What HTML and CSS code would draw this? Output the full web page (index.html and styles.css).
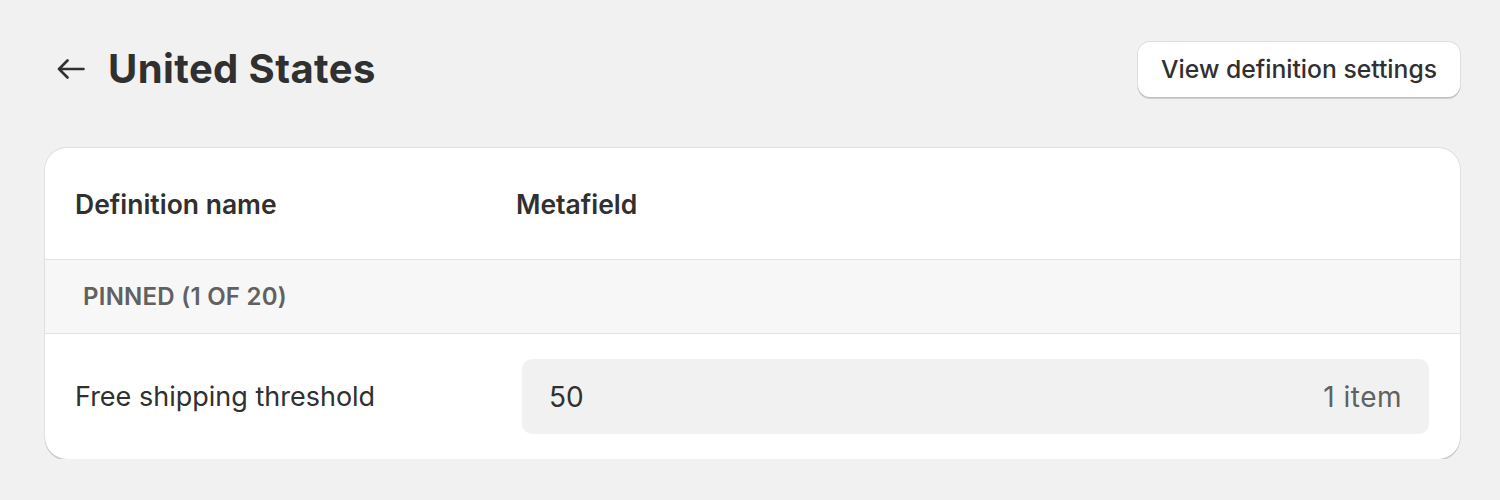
FILE: index.html
```html
<!DOCTYPE html>
<html lang="en">
<head>
  <meta charset="UTF-8">
  <title>United States</title>
  <link rel="stylesheet" href="styles.css">
</head>
<body>
  <div class="page">
    <div class="header">
      <div class="title-wrap">
        <a class="back" href="#" title="Back">
          <svg width="28" height="20" viewBox="0 0 28 20"><path d="M26.5 10H2M10.5 1.5L2 10l8.5 8.5" fill="none" stroke="#303030" stroke-width="2.6" stroke-linecap="round" stroke-linejoin="round"/></svg>
        </a>
        <h1 class="title">United States</h1>
      </div>
      <button class="btn">View definition settings</button>
    </div>

    <div class="card">
      <div class="row head">
        <div class="col-name">Definition name</div>
        <div class="col-field">Metafield</div>
      </div>
      <div class="section">PINNED (1 OF 20)</div>
      <div class="row item">
        <div class="col-name">Free shipping threshold</div>
        <div class="col-field">
          <div class="field">
            <span class="value">50</span>
            <span class="count">1 item</span>
          </div>
        </div>
      </div>
    </div>
  </div>
</body>
</html>
```

FILE: styles.css
```css
html, body{margin:0; padding:0;}
body{background:#f1f1f1; font-family:Inter, "Liberation Sans", sans-serif; color:#303030;}
.page{padding:41px 40px 0 45px;}

.header{display:flex; align-items:center; justify-content:space-between; height:56px; margin-bottom:51px;}
.title-wrap{display:flex; align-items:center;}
.back{display:flex; width:28px; height:20px; margin-left:12px; margin-right:23px;}
.title{margin:0; font-size:40px; font-weight:700; letter-spacing:0.4px; line-height:1;}

.btn{height:55px; padding:0 23px; border:0; border-radius:12px; background:#fff; font-family:inherit; font-size:24.7px; font-weight:450; color:#303030; box-shadow:0 0 0 1px rgba(0,0,0,0.08), 0 2px 0 rgba(0,0,0,0.14);}

.card{background:#fff; border-radius:22px; box-shadow:0 0 0 1px rgba(0,0,0,0.07), 0 2px 0 rgba(0,0,0,0.1); overflow:hidden;}
.row{display:flex; align-items:center; padding:0 31px 0 30px;}
.col-name{width:441px; flex-shrink:0;}
.col-field{flex:1;}
.head{height:111px; font-size:26.5px; font-weight:600; border-bottom:1px solid #e3e3e3;}
.section{height:73px; display:flex; align-items:center; padding-left:38px; background:#f7f7f7; font-size:24px; font-weight:600; letter-spacing:0.25px; color:#616161; border-bottom:1px solid #e3e3e3;}
.item{height:125px; font-size:27px;}
.item .col-field{margin-left:6px;}
.field{display:flex; align-items:center; justify-content:space-between; height:75px; padding:0 27px; border-radius:10px; background:#f1f1f1; font-size:28px;}
.count{color:#616161; letter-spacing:0.5px;}
```
